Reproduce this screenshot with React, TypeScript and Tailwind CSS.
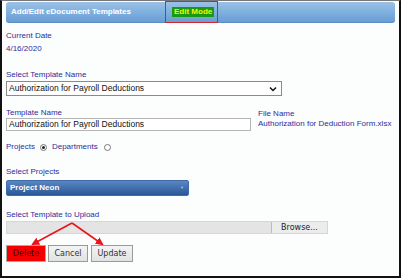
export default function App() {
  const label = "text-[8px] leading-[10px] text-[#2d2d9c] whitespace-nowrap";
  const tahoma = { fontFamily: '"DejaVu Sans", Tahoma, sans-serif' };
  return (
    <div
      className="relative w-[401px] h-[278px] bg-[#fcfdfd] border-x-2 border-b-2 border-t border-x-[#111] border-b-[#111] border-t-[#777] overflow-hidden"
      style={{ fontFamily: '"Liberation Sans", Arial, sans-serif' }}
    >
      {/* Header bar */}
      <div className="mx-[4px] mt-[1px] h-[21px] rounded-[3px] bg-gradient-to-b from-[#9dc0e5] via-[#7fb0e0] to-[#6a9dd2] border-b border-[#5b8cc4] flex items-center">
        <span className="ml-[5px] w-[154px] text-white font-bold text-[8px] whitespace-nowrap">Add/Edit eDocument Templates</span>
        <span className="h-[22px] pl-[6px] pr-[3px] border border-[#d3262b] flex items-center">
          <span className="bg-[#199a16] text-[#f6f500] font-bold text-[8px] leading-[10px] px-[2px] whitespace-nowrap">Edit Mode</span>
        </span>
      </div>

      <div className="px-[4px] flex flex-col items-start">
        <div className={`${label} mt-[8px]`}>Current Date</div>
        <div className={`${label} mt-[3px]`}>4/16/2020</div>

        <div className={`${label} mt-[16px]`}>Select Template Name</div>
        <div className="mt-[1px] w-[276px] h-[15px] border border-[#8a8a8a] bg-white flex items-center justify-between pl-[2px] pr-[4px]">
          <span className="text-[8.5px] text-[#111] whitespace-nowrap">Authorization for Payroll Deductions</span>
          <svg width="8" height="6" viewBox="0 0 8 6">
            <path d="M1 1.5 L4 4.5 L7 1.5" fill="none" stroke="#111" strokeWidth="1.5" />
          </svg>
        </div>

        <div className="flex mt-[12px]">
          <div className="flex flex-col w-[252px]">
            <div className={label}>Template Name</div>
            <div className="w-[245px] h-[13px] border border-[#b5b5b5] bg-white flex items-center pl-[2px]">
              <span className="text-[8.5px] text-[#111] whitespace-nowrap">Authorization for Payroll Deductions</span>
            </div>
          </div>
          <div className="flex flex-col mt-[1px]">
            <div className={label}>File Name</div>
            <div className={label}>Authorization for Deduction Form.xlsx</div>
          </div>
        </div>

        <div className="flex items-center mt-[11px] h-[10px]">
          <span className={label}>Projects</span>
          <span className="ml-[5px] w-[7px] h-[7px] rounded-full border border-[#777] bg-white flex items-center justify-center">
            <span className="w-[3px] h-[3px] rounded-full bg-[#222]" />
          </span>
          <span className={`${label} ml-[5px]`}>Departments</span>
          <span className="ml-[6px] w-[7px] h-[7px] rounded-full border border-[#777] bg-white" />
        </div>

        <div className={`${label} mt-[15px]`}>Select Projects</div>
        <div className="mt-[3px] w-[183px] h-[16px] rounded-[2px] bg-gradient-to-b from-[#5b87c4] to-[#2a5797] border border-[#3f6aa8] flex items-center pl-[3px] pr-[4px]">
          <span className="flex-1 text-white font-bold text-[8px] whitespace-nowrap">Project Neon</span>
          <span className="text-[#a9c4e8] text-[4px]">▼</span>
        </div>

        <div className={`${label} mt-[14px]`}>Select Template to Upload</div>
        <div className="mt-[1px] w-[322px] h-[13px] bg-[#e4e4e4] border border-[#d6d6d6] flex justify-end">
          <span className="w-[56px] h-full bg-[#ececec] border-l border-[#bdbdbd] text-[8px] leading-[11px] text-[#222] text-center" style={tahoma}>
            Browse...
          </span>
        </div>

        <div className="flex mt-[11px] gap-[2px]">
          <button className="w-[40px] h-[17px] bg-[#f40000] border border-[#aaa] text-[8px] leading-[15px] text-[#3a0000]" style={tahoma}>Delete</button>
          <button className="w-[40px] h-[17px] bg-gradient-to-b from-[#f4f4f4] to-[#e2e2e2] border border-[#9a9a9a] text-[8px] leading-[15px] text-[#333]" style={tahoma}>Cancel</button>
          <button className="ml-[1px] w-[42px] h-[17px] bg-gradient-to-b from-[#f4f4f4] to-[#e2e2e2] border border-[#9a9a9a] text-[8px] leading-[15px] text-[#333]" style={tahoma}>Update</button>
        </div>
      </div>

      {/* Annotation arrows */}
      <svg className="absolute left-0 top-0" width="401" height="278" viewBox="0 0 401 278">
        <defs>
          <marker id="ah" markerWidth="8" markerHeight="8" refX="6" refY="4" orient="auto" markerUnits="userSpaceOnUse">
            <path d="M0 0 L8 4 L0 8 Z" fill="#e8161b" />
          </marker>
        </defs>
        <line x1="70" y1="222" x2="31" y2="243" stroke="#e8161b" strokeWidth="1.6" markerEnd="url(#ah)" />
        <line x1="70" y1="222" x2="100" y2="243" stroke="#e8161b" strokeWidth="1.6" markerEnd="url(#ah)" />
      </svg>
    </div>
  );
}
